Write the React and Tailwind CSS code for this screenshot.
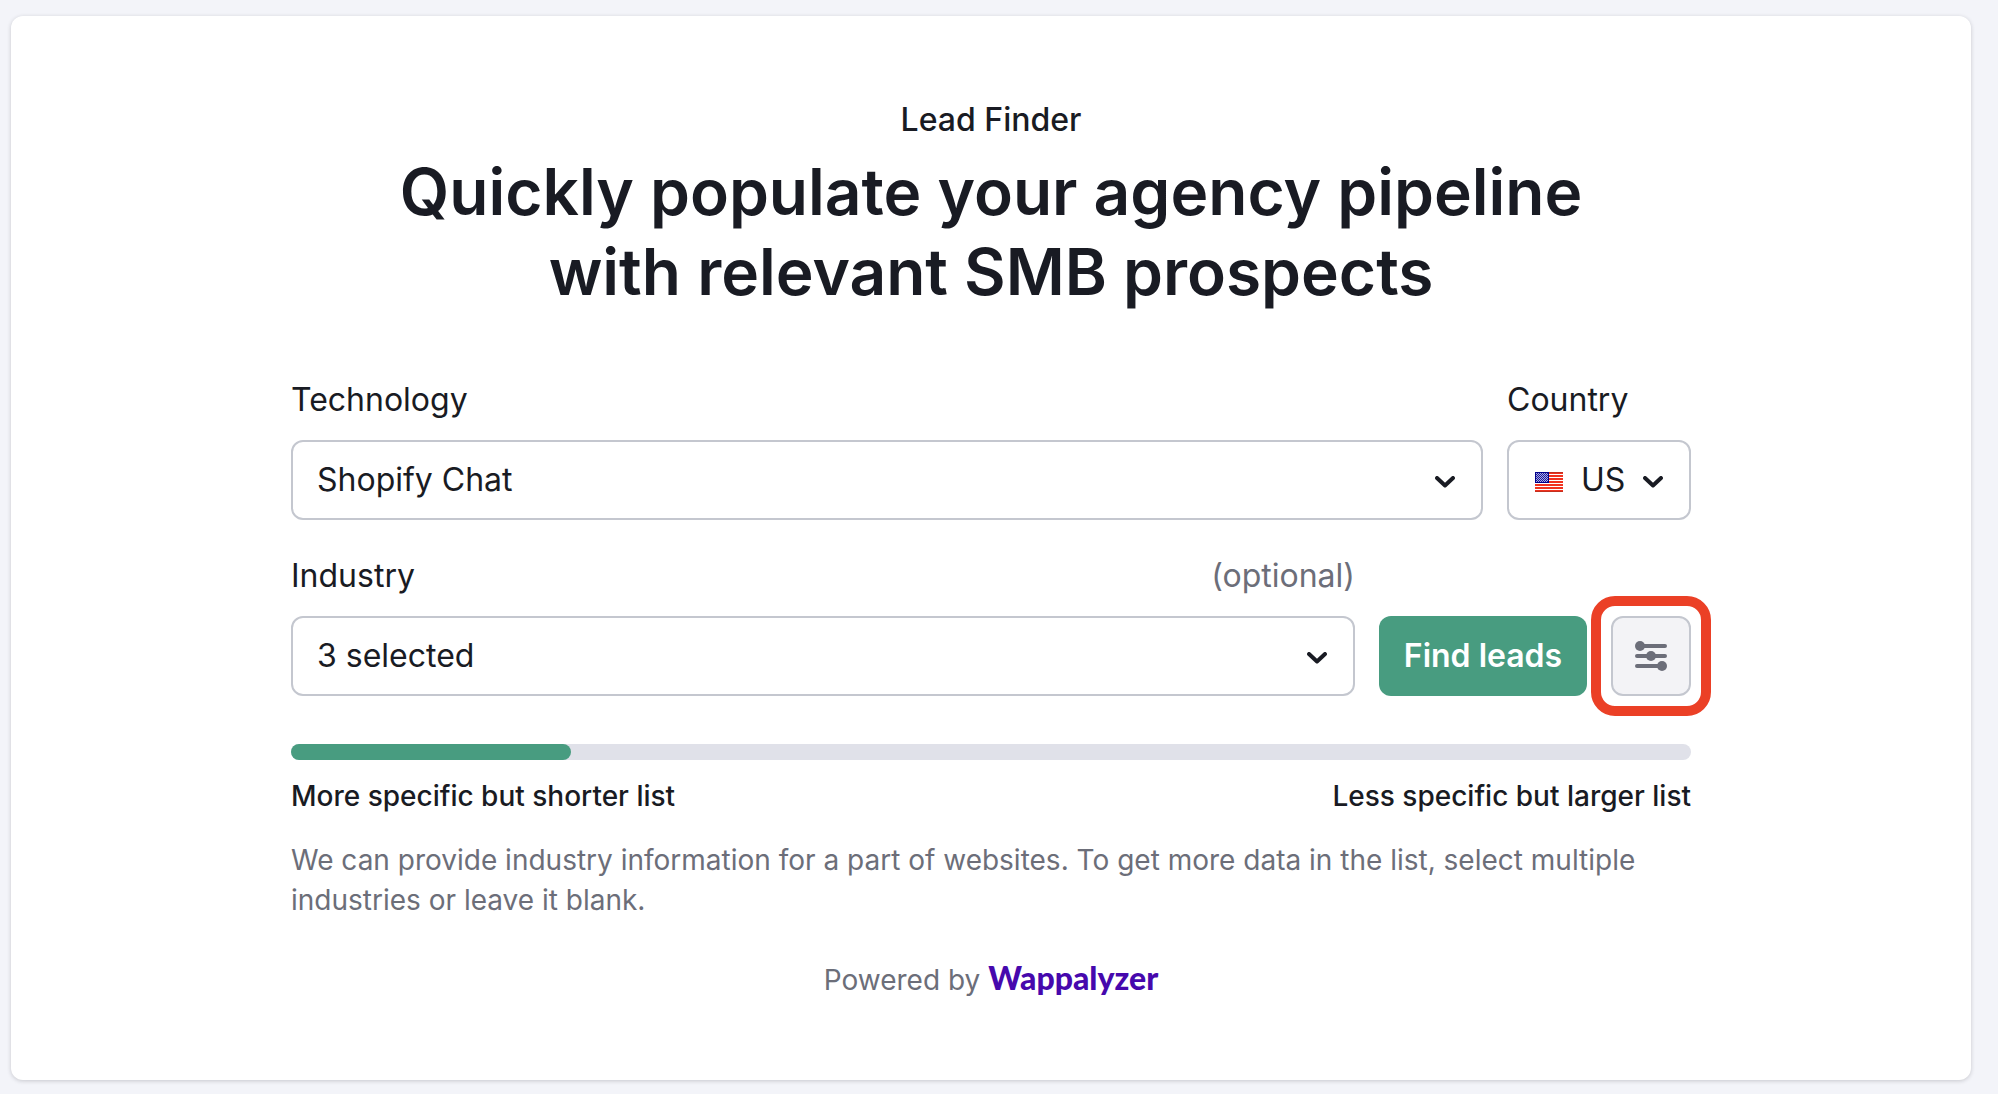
import React, { useState } from "react";

function ChevronIcon() {
  return (
    <svg
      width="20"
      height="12"
      viewBox="0 0 20 12"
      fill="none"
      stroke="#191b23"
      strokeWidth="4"
      strokeLinecap="round"
      strokeLinejoin="round"
      aria-hidden="true"
    >
      <path d="M2 2l8 7.5L18 2" />
    </svg>
  );
}

function SlidersIcon() {
  return (
    <svg width="32" height="30" viewBox="0 0 32 30" aria-hidden="true">
      <path
        d="M5 5h25M2 15h28M2 25h25"
        stroke="#6c6e79"
        strokeWidth="4"
        strokeLinecap="round"
      />
      <circle cx="5" cy="5" r="5" fill="#6c6e79" />
      <circle cx="16" cy="15" r="5" fill="#6c6e79" />
      <circle cx="27" cy="25" r="5" fill="#6c6e79" />
    </svg>
  );
}

function UsFlag() {
  return (
    <svg width="28" height="20" viewBox="0 0 28 20" aria-hidden="true">
      <defs>
        <pattern id="stars" width="2" height="2" patternUnits="userSpaceOnUse">
          <rect width="2" height="2" fill="#1c1c96" />
          <rect width="1" height="1" fill="#a8a8e8" />
          <rect x="1" y="1" width="1" height="1" fill="#a8a8e8" />
        </pattern>
      </defs>
      <rect width="28" height="20" fill="#f0321f" />
      <path
        d="M0 2.5h28M0 5.5h28M0 8.5h28M0 11.5h28M0 14.5h28M0 17.5h28"
        stroke="#fff"
        strokeWidth="1.2"
      />
      <path d="M0 .5h28M0 19.5h28" stroke="#c3301f" />
      <rect width="14" height="11" fill="#00008b" />
      <rect x="1" y="1" width="12" height="9" fill="url(#stars)" />
    </svg>
  );
}

function App() {
  const [technology, setTechnology] = useState("Shopify Chat");
  const [country, setCountry] = useState("US");
  const [industry, setIndustry] = useState("3 selected");

  return (
    <div className="min-h-screen bg-[#f3f4f9] pt-4 pb-[15px] pl-[11px] pr-[27px] font-['Inter',sans-serif] text-[#191b23]">
      <main className="rounded-xl bg-white px-6 py-20 shadow-[0_1px_4px_rgba(25,27,35,0.2)]">
        <header className="text-center">
          <p className="text-[32px] leading-[48px] font-medium">Lead Finder</p>
          <h1 className="mt-2 text-[64px] leading-[80px] font-semibold">
            Quickly populate your agency pipeline
            <br />
            with relevant SMB prospects
          </h1>
        </header>

        <form className="mx-auto mt-16 max-w-[1400px]" onSubmit={(e) => e.preventDefault()}>
          {/* Technology and country */}
          <div className="flex gap-6">
            <div className="flex-1">
              <label htmlFor="technology" className="block text-[32px] leading-[48px]">
                Technology
              </label>
              <div className="relative mt-4">
                <select
                  id="technology"
                  value={technology}
                  onChange={(e) => setTechnology(e.target.value)}
                  className="block h-20 w-full appearance-none rounded-xl border-2 border-[#c4c7cf] bg-white px-6 text-[32px]"
                >
                  <option>Shopify Chat</option>
                </select>
                <span className="pointer-events-none absolute inset-y-0 right-7 flex items-center pt-1">
                  <ChevronIcon />
                </span>
              </div>
            </div>
            <div className="w-[184px]">
              <label htmlFor="country" className="block text-[32px] leading-[48px]">
                Country
              </label>
              <div className="relative mt-4">
                <select
                  id="country"
                  value={country}
                  onChange={(e) => setCountry(e.target.value)}
                  className="block h-20 w-full appearance-none rounded-xl border-2 border-[#c4c7cf] bg-white pl-[72px] text-[32px]"
                >
                  <option>US</option>
                </select>
                <span className="pointer-events-none absolute inset-y-0 left-7 flex items-center pt-1">
                  <UsFlag />
                </span>
                <span className="pointer-events-none absolute inset-y-0 right-7 flex items-center pt-1">
                  <ChevronIcon />
                </span>
              </div>
            </div>
          </div>

          {/* Industry and actions */}
          <div className="mt-8 flex items-end gap-6">
            <div className="flex-1">
              <div className="flex justify-between text-[32px] leading-[48px]">
                <label htmlFor="industry">Industry</label>
                <span className="text-[#6c6e79]">(optional)</span>
              </div>
              <div className="relative mt-4">
                <select
                  id="industry"
                  value={industry}
                  onChange={(e) => setIndustry(e.target.value)}
                  className="block h-20 w-full appearance-none rounded-xl border-2 border-[#c4c7cf] bg-white px-6 text-[32px]"
                >
                  <option>3 selected</option>
                </select>
                <span className="pointer-events-none absolute inset-y-0 right-7 flex items-center pt-1">
                  <ChevronIcon />
                </span>
              </div>
            </div>
            <button
              type="submit"
              className="h-20 w-[208px] rounded-xl bg-[#489c80] text-[32px] font-semibold text-white"
            >
              Find leads
            </button>
            <div className="relative">
              <button
                type="button"
                aria-label="Filters"
                className="flex size-20 items-center justify-center rounded-xl border-2 border-[#c4c7cf] bg-[#f3f3f6]"
              >
                <SlidersIcon />
              </button>
              {/* Highlight ring */}
              <div className="pointer-events-none absolute -inset-5 rounded-3xl border-10 border-[#eb4026]" />
            </div>
          </div>

          {/* List size */}
          <div
            role="progressbar"
            aria-label="List size"
            aria-valuenow={20}
            className="mt-12 h-4 rounded-full bg-[#e0e1e9]"
          >
            <div className="h-full w-1/5 rounded-full bg-[#489c80]" />
          </div>
          <div className="mt-4 flex justify-between text-[28px] leading-[40px] font-medium">
            <span>More specific but shorter list</span>
            <span>Less specific but larger list</span>
          </div>
          <p className="mt-6 text-[28px] leading-[40px] text-[#6c6e79]">
            We can provide industry information for a part of websites. To get more data in the
            list, select multiple industries or leave it blank.
          </p>
        </form>

        <footer className="mt-10 flex items-baseline justify-center gap-2 text-[28px] leading-[40px] text-[#6c6e79]">
          <span>Powered by</span>
          <a
            href="#wappalyzer"
            className="font-['Lato',sans-serif] text-[32px] leading-[32px] font-black text-[#4608ad]"
          >
            Wappalyzer
          </a>
        </footer>
      </main>
    </div>
  );
}

export default App;
